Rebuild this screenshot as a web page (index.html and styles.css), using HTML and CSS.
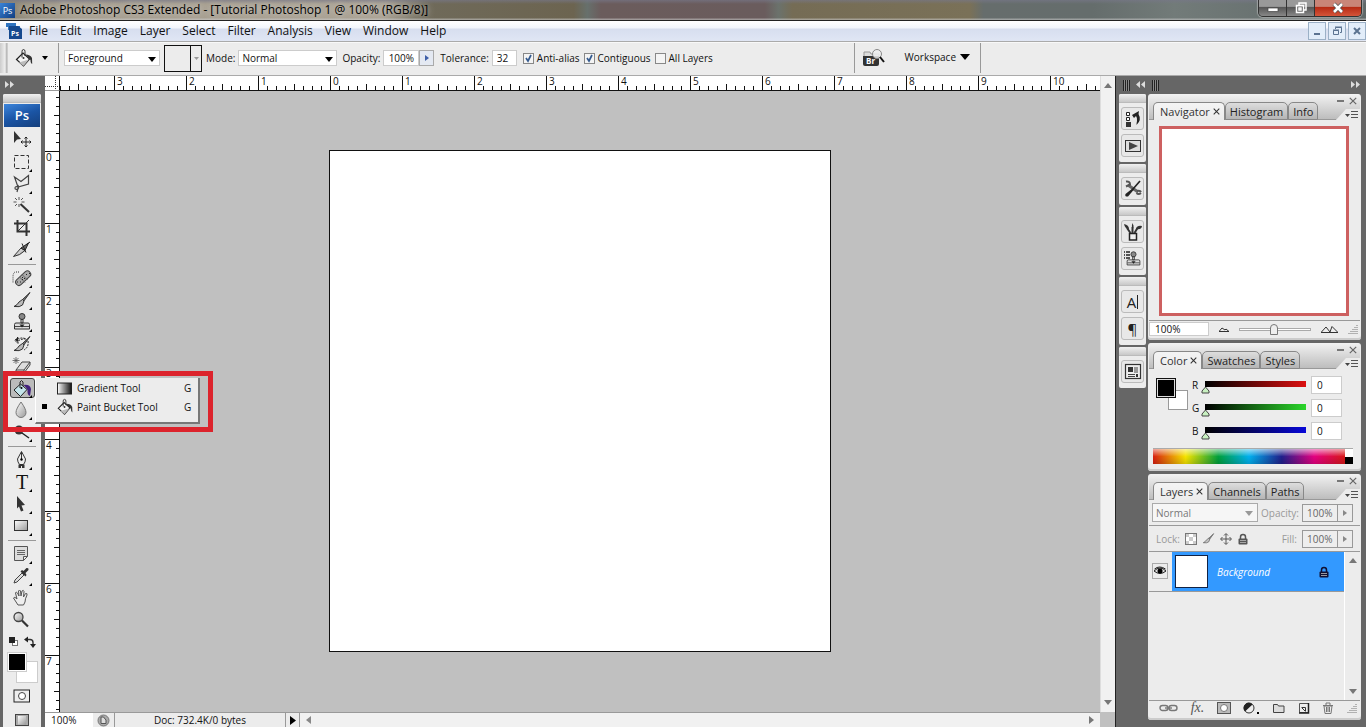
FILE: index.html
```html
<!DOCTYPE html>
<html lang="en">
<head>
<meta charset="utf-8">
<title>Adobe Photoshop CS3 Extended</title>
<link rel="stylesheet" href="styles.css">
</head>
<body>
<svg class="defs" aria-hidden="true">
  <defs>
    <linearGradient id="metal" x1="0" y1="0" x2="1" y2="1"><stop offset="0" stop-color="#fff"/><stop offset="1" stop-color="#999"/></linearGradient>
    <linearGradient id="fade"><stop offset="0" stop-color="#fff"/><stop offset="1" stop-color="#111"/></linearGradient>
    <symbol id="bucket" viewBox="0 0 20 20">
      <path d="M2.500 11.500 9 5l6.500 6-6 7z" fill="#f4f4f4" stroke="#222" stroke-width="1.200"/>
      <path d="M5 14.500 9.500 18l5.500-6.500z" fill="#bbb"/>
      <path d="M8 9.500V3.500Q8 1.500 9.500 1.500T11 3.500V8" fill="none" stroke="#333"/>
      <path d="M11.500 6.500Q16.500 6.500 18 10l.2 6q-1.700-.5-1.700-4L14.500 10z" fill="#333"/>
      <circle cx="9.500" cy="10" r="1" fill="#333"/>
    </symbol>
    <symbol id="stamp" viewBox="0 0 20 20">
      <circle cx="10" cy="4.500" r="3" fill="#888" stroke="#333"/>
      <path d="M9 7.500h2V11H9zM4 11h12q1.500 0 1.500 1.500V17h-15v-4.500Q2.500 11 4 11z" fill="#ddd" stroke="#333"/>
      <path d="M3 14.500h14" stroke="#444"/><path d="M7.500 12.500h5L10 15.500z" fill="#222"/>
    </symbol>
    <symbol id="brush" viewBox="0 0 20 20">
      <path d="M18 2.500 10 10l1.500 1.500z" fill="#777" stroke="#333"/>
      <path d="M10.500 9.500 7 12q-1.500 3-5 4.500 6 1 8.500-1.500L12 11z" fill="#bbb" stroke="#333"/>
    </symbol>
    <symbol id="lock" viewBox="0 0 12 12">
      <path d="M3.500 6V4q0-2.500 2.500-2.500T8.500 4v2" fill="none" stroke="currentColor" stroke-width="1.500"/>
      <rect x="1.500" y="5.500" width="9" height="6" rx="1" fill="currentColor"/><path d="M3 7.500h6M3 9.500h6" stroke="#bbb" stroke-width=".8"/>
    </symbol>
    <symbol id="cross" viewBox="0 0 8 8"><path d="m.8.8 6.400 6.400m0-6.400L.8 7.200" fill="none" stroke="currentColor" stroke-width="1.200"/></symbol>
    <symbol id="flymenu" viewBox="0 0 13 8"><path d="M0 3h5L2.500 6z" fill="#444"/><path d="M6 .5h7M6 3.500h7M6 6.500h7" stroke="#555"/></symbol>
    <symbol id="size-grip" viewBox="0 0 10 10"><path d="M9 1v1M7 3v1m2-1v1M5 5v1m2-1v1m2-1v1M3 7v1m2-1v1m2-1v1m2-1v1M1 9v1m2-1v1m2-1v1m2-1v1m2-1v1" stroke="#777"/></symbol>
  </defs>
</svg>

<header class="titlebar">
  <span class="app-badge">Ps</span>
  <h1 class="titlebar-text">Adobe Photoshop CS3 Extended - [Tutorial Photoshop 1 @ 100% (RGB/8)]</h1>
  <div class="window-buttons">
    <button class="win" aria-label="Minimize"><svg width="12" height="12"><rect x="1" y="6" width="10" height="3.500" fill="#fff" stroke="#444" stroke-width=".7"/></svg></button>
    <button class="win" aria-label="Restore"><svg width="12" height="12" fill="none"><path d="M4 3V1h7v7H9" stroke="#fff" stroke-width="1.500"/><path d="M1.500 3.500h7v7h-7zM4 6h2v2H4z" stroke="#fff" stroke-width="1.500"/></svg></button>
    <button class="win win-close" aria-label="Close"><svg width="12" height="12"><path d="m2 2 8 8m0-8-8 8" stroke="#555" stroke-width="4"/><path d="m2 2 8 8m0-8-8 8" stroke="#fff" stroke-width="2.500"/></svg></button>
  </div>
</header>

<nav class="menubar">
  <svg class="doc-icon" width="16" height="16"><path d="M0 0h10v3h4v4H2V4H0z" fill="#2f74c0"/><path d="M3 3h9l4 3v10H3z" fill="#16498e"/><text x="5" y="13" class="doc-icon-text">Ps</text></svg>
  <button class="menu">File</button><button class="menu">Edit</button><button class="menu">Image</button><button class="menu">Layer</button><button class="menu">Select</button><button class="menu">Filter</button><button class="menu">Analysis</button><button class="menu">View</button><button class="menu">Window</button><button class="menu">Help</button>
  <div class="doc-buttons">
    <button class="docbtn" aria-label="Minimize document"><svg width="12" height="12"><path d="M3 9h6" stroke="#5b7390" stroke-width="2"/></svg></button>
    <button class="docbtn" aria-label="Restore document"><svg width="12" height="12" fill="none" stroke="#5b7390"><path d="M4.500 4V2.500h6v5H9M4 2h7M2.500 5.500h5v4h-5zM2 5h6"/></svg></button>
    <button class="docbtn" aria-label="Close document"><svg width="12" height="12"><path d="m3 3 6 6m0-6L3 9" stroke="#5b7390" stroke-width="2"/></svg></button>
  </div>
</nav>

<section class="options" aria-label="Tool options">
  <span class="options-grip"></span>
  <button class="current-tool" aria-label="Paint Bucket Tool presets"><svg width="20" height="20"><use href="#bucket"/></svg><svg width="6" height="4"><path d="M0 0h6L3 4z"/></svg></button>
  <span class="rule"></span>
  <select class="field select fill-source" aria-label="Fill source"><option>Foreground</option></select>
  <button class="pattern" aria-label="Pattern"><span class="pattern-arrow"><svg width="5" height="3"><path d="M0 0h5L2.500 3z" fill="#999"/></svg></span></button>
  <label class="opt" for="mode">Mode:</label>
  <select class="field select blend-mode" id="mode"><option>Normal</option></select>
  <label class="opt" for="opacity">Opacity:</label>
  <span class="stepper"><input class="field num" id="opacity" value="100%"><button class="step" aria-label="Opacity slider"><svg width="4" height="6"><path d="M0 0v6l4-3z" fill="#3f5fa8"/></svg></button></span>
  <label class="opt" for="tolerance">Tolerance:</label>
  <input class="field tolerance" id="tolerance" value="32">
  <label class="check"><input type="checkbox" checked>Anti-alias</label>
  <label class="check"><input type="checkbox" checked>Contiguous</label>
  <label class="check"><input type="checkbox">All Layers</label>
  <div class="options-right">
    <button class="bridge" aria-label="Go to Bridge"><svg width="24" height="20"><path d="M2 4h6l1 2h8v4H2z" fill="#ddd" stroke="#999"/><path d="M1 8h16v8q0 2-2 2H3q-2 0-2-2z" fill="#333"/><text x="4" y="15.500" class="bridge-text">Br</text><circle cx="15" cy="6" r="4.500" fill="#eee" fill-opacity=".85" stroke="#888"/><path d="m18 9 4 5" stroke="#111" stroke-width="2"/></svg></button>
    <button class="workspace-btn">Workspace <svg width="10" height="6"><path d="M0 0h10L5 6z"/></svg></button>
  </div>
</section>

<main class="main">
  <aside class="toolbar" aria-label="Tools">
    <button class="collapse" aria-label="Expand tools"><svg width="10" height="8" fill="#ddd"><path d="M0 0v7l4-3.500zM5 0v7l4-3.500z"/></svg></button>
    <div class="toolpanel">
      <div class="grip"></div>
      <div class="ps-logo">Ps</div>
      <ul class="tools">
        <li class="tool plain"><button aria-label="Move"><svg width="20" height="20"><path d="M2 1v12l3-3.500 4-.5z" fill="#333"/><path d="M14 7v10M9 12h10M12.500 8.500 14 7l1.500 1.500m-3 7L14 17l1.500-1.500m-5-5L9 12l1.500 1.500m7-3L19 12l-1.500 1.500" fill="none" stroke="#222"/></svg></button></li>
        <li class="tool"><button aria-label="Marquee"><svg width="20" height="20"><rect x="2.500" y="3.500" width="14" height="13" fill="none" stroke="#333" stroke-dasharray="4 2"/></svg></button></li>
        <li class="tool"><button aria-label="Lasso"><svg width="20" height="20"><path d="M2.500 3 9 7.500l7.500-6V10L6 13 2.500 3zM6 13q-3-1-3 1t3 1q1-1 0-4m0 3-1 4" fill="none" stroke="#444" stroke-width="1.200"/></svg></button></li>
        <li class="tool"><button aria-label="Magic wand"><svg width="20" height="20"><path d="M7 1v3m0 4v3M1.500 6h3m5 0h3M3 2l2 2M3 10l2-2m4-4 2-2" stroke="#555"/><path d="m8.500 8 8.500 8" stroke="#333" stroke-width="2"/></svg></button></li>
        <li class="tool plain"><button aria-label="Crop"><svg width="20" height="20"><path d="M5.500 2v11.500H18M2 5.500h12.500V18" fill="none" stroke="#333" stroke-width="2"/><path d="M6 13 17 2" stroke="#333"/></svg></button></li>
        <li class="tool"><button aria-label="Slice"><svg width="20" height="20"><path d="M1.500 16.500 9 8l4 2.500q-5 5-11.500 6z" fill="url(#metal)" stroke="#333"/><path d="M9 8 16.500 3 13 10.500zM10 3.500l4 9M18 2l-4 3" fill="#666" stroke="#222"/></svg></button></li>
      </ul>
      <hr class="tool-rule">
      <ul class="tools">
        <li class="tool"><button aria-label="Healing brush"><svg width="22" height="20"><rect x="3" y="7" width="18" height="6.500" rx="3" transform="rotate(-43 12 10)" fill="#aaa" stroke="#444"/><path d="m8.500 9 5.500 5.500M11 6.500l5.500 5.500" stroke="#666"/><path d="M11 9.500h1m1 1h1m-3 1h1m3-5h1m2-1h1M6 14h1m2 0h1" stroke="#222"/><path d="M8 4H4Q2 5 2 9v6" fill="none" stroke="#333" stroke-dasharray="1 1"/></svg></button></li>
        <li class="tool"><button aria-label="Brush"><svg width="20" height="20"><use href="#brush"/></svg></button></li>
        <li class="tool"><button aria-label="Clone stamp"><svg width="20" height="20"><use href="#stamp"/></svg></button></li>
        <li class="tool"><button aria-label="History brush"><svg width="20" height="20"><use href="#brush"/><path d="M3 6.500 6 3v2q4-2 8 0-4-.5-8 2v2.500zM16 7q1 6-4 9" fill="none" stroke="#222" stroke-dasharray="2 1"/><path d="m3 6 3-3v5z" fill="#222"/></svg></button></li>
        <li class="tool"><button aria-label="Eraser"><svg width="20" height="20"><path d="m4 14 6-8h8l-6 8zM12 14v3l6-8V6M4 14v3h8" fill="#ddd" stroke="#444"/><path d="M4 1v7M.5 4.500h7M1.500 2l5 5m0-5-5 5" stroke="#555" stroke-width=".8"/></svg></button></li>
        <li class="tool active">
          <button aria-label="Paint bucket" aria-pressed="true"><svg width="20" height="20"><path d="M2 11 8.500 5l6.500 5.500L8.500 17.500z" fill="#c4e4ea" stroke="#222"/><path d="M8 9V3q1.500-3 3 0v4" fill="none" stroke="#222"/><path d="M11.500 6Q18 5 19 10l-1 7q-3-1-2.500-6L14 8.500z" fill="#41217c"/><circle cx="9.500" cy="9" r="1"/></svg></button>
          <div class="flyout" role="menu">
            <button class="flyout-item" role="menuitem"><span></span><svg width="18" height="14"><rect x="1.500" y="2" width="14" height="11" fill="url(#fade)" stroke="#222"/></svg><span>Gradient Tool</span><kbd>G</kbd></button>
            <button class="flyout-item" role="menuitem"><span class="bullet"></span><svg width="18" height="18"><use href="#bucket"/></svg><span>Paint Bucket Tool</span><kbd>G</kbd></button>
          </div>
          <div class="highlight"></div>
        </li>
        <li class="tool"><button aria-label="Blur"><svg width="20" height="20"><path d="M9 2q5 7 5 10.500a5 5 0 0 1-10 0Q4 9 9 2z" fill="url(#metal)" stroke="#777"/></svg></button></li>
        <li class="tool"><button aria-label="Dodge"><svg width="20" height="20"><circle cx="7" cy="8" r="4.500" fill="#3a3232"/><path d="m10 11 7 5" stroke="#222" stroke-width="1.500"/></svg></button></li>
      </ul>
      <hr class="tool-rule">
      <ul class="tools">
        <li class="tool"><button aria-label="Pen"><svg width="20" height="20"><path d="M9.500 1.500 5.500 9q0 3 2 5.500h4q2-2.500 2-5.500zM9.500 2v7" fill="#eee" stroke="#333"/><circle cx="9.500" cy="9.500" r="1.200"/><path d="M6.500 14.500h6V18H10v-2H9v2H6.500z" fill="#333"/></svg></button></li>
        <li class="tool"><button class="type-tool" aria-label="Type">T</button></li>
        <li class="tool"><button aria-label="Path selection"><svg width="20" height="20"><path d="m5 2 8 9-3.500.500 2 5-2.500 1-2-5L5 14.500z" fill="#333"/></svg></button></li>
        <li class="tool"><button aria-label="Rectangle"><svg width="20" height="20"><rect x="2.500" y="4.500" width="13" height="10" fill="url(#metal)" stroke="#333"/></svg></button></li>
      </ul>
      <hr class="tool-rule">
      <ul class="tools">
        <li class="tool"><button aria-label="Notes"><svg width="20" height="20"><path d="M2.500 2.500h13v10l-4 4h-9zM15.500 12.500h-4v4" fill="#ddd" stroke="#555"/><path d="M5 6.500h8M5 8.500h8M5 10.500h8" stroke="#666"/></svg></button></li>
        <li class="tool"><button aria-label="Eyedropper"><svg width="20" height="20"><path d="m2 17 1-3 7-7 2 2-7 7z" fill="#ddd" stroke="#444"/><path d="m8.500 5.500 5 5 1-1.500-1-2 3-3q.500-2.500-2-2l-3 3-1.500-1z" fill="#333"/></svg></button></li>
        <li class="tool plain"><button aria-label="Hand"><svg width="20" height="20"><path d="M6 17 1.500 10q1-2 3.500 1L3.500 5q.500-2 2 0L7 8l-.5-5q1-2 2 0L9 8l1-5q1.500-1.500 2 .5L11.500 9l2-3.500q2-.5 1.500 1.500-2 4-2 7l-1.500 3z" fill="#eee" stroke="#555"/></svg></button></li>
        <li class="tool plain"><button aria-label="Zoom"><svg width="20" height="20"><circle cx="6.500" cy="7" r="4.500" fill="url(#metal)" stroke="#444" stroke-width="1.300"/><path d="m10 10.500 6 6" stroke="#333" stroke-width="2.200"/></svg></button></li>
      </ul>
      <div class="mini-row">
        <button aria-label="Default colors"><svg width="11" height="11"><rect x="4.500" y="4.500" width="5" height="5" fill="#fff" stroke="#777"/><rect x="1" y="1" width="6" height="6" fill="#222"/></svg></button>
        <button aria-label="Swap colors"><svg width="12" height="12"><path d="M2 3.500h4q3 0 3 3v3" fill="none" stroke="#333" stroke-width="1.400"/><path d="M4 .5v6l-4-3zM6 8h6l-3 4z" fill="#222"/></svg></button>
      </div>
      <div class="swatches">
        <button class="swatch-back" aria-label="Background color"></button>
        <button class="swatch-front" aria-label="Foreground color"></button>
      </div>
      <button class="mode-btn" aria-label="Quick mask"><svg width="18" height="14"><rect x="1" y="1" width="15.500" height="12" fill="#eee" stroke="#222"/><circle cx="9" cy="7" r="3.500" fill="#fff" stroke="#444"/></svg></button>
      <button class="mode-btn" aria-label="Screen mode"><svg width="18" height="14"><rect x="2.500" y="1.500" width="13" height="11" fill="#aaa" stroke="#444"/><rect x="5" y="3" width="8" height="8.500" fill="url(#metal)"/></svg></button>
    </div>
  </aside>

  <section class="workspace">
    <div class="ruler-corner"></div>
    <div class="ruler ruler-x"><span>3</span><span>2</span><span>1</span><span>0</span><span>1</span><span>2</span><span>3</span><span>4</span><span>5</span><span>6</span><span>7</span><span>8</span><span>9</span><span>10</span></div>
    <div class="scroll-y"><svg width="8" height="5"><path d="M0 5h8L4 0z" fill="#777"/></svg><svg width="8" height="5"><path d="M0 0h8L4 5z" fill="#777"/></svg></div>
    <div class="ruler ruler-y"><span>0</span><span>1</span><span>2</span><span>3</span><span>4</span><span>5</span><span>6</span><span>7</span></div>
    <div class="viewport"><div class="artboard"></div></div>
    <footer class="statusbar">
      <input class="status-zoom" value="100%" aria-label="Zoom level">
      <button class="status-cue" aria-label="Version Cue"><svg width="13" height="13"><circle cx="6.500" cy="6.500" r="5.500" fill="#aaa" stroke="#777"/><path d="M4 3v6.500h5V6L6.500 3z" fill="#ddd" stroke="#555"/></svg></button>
      <span class="status-doc">Doc: 732.4K/0 bytes</span>
      <button class="status-more" aria-label="Status options"><svg width="6" height="9"><path d="M0 0v9l6-4.500z"/></svg></button>
      <div class="scroll-x"><svg width="5" height="8"><path d="M5 0v8L0 4z" fill="#888"/></svg><svg width="5" height="8"><path d="M0 0v8l5-4z" fill="#777"/></svg></div>
    </footer>
  </section>

  <aside class="dock">
    <div class="dock-column">
      <div class="dock-head"><span class="dock-bars"></span><svg width="10" height="8" fill="#ddd"><path d="M4 0v7L0 3.500zM9 0v7L5 3.500z"/></svg></div>
      <div class="icon-group"><div class="grip"></div>
        <button class="dock-icon" aria-label="History"><svg width="20" height="20"><path d="M3.500 3.500h3v3h-3zM3.500 8.500h3v3h-3z" fill="#fff" stroke="#222"/><path d="M3 13h5v5H3z" fill="#333"/><path d="m9 6 7-4-.5 3q3.500 6-2 11 0-2 .5-4 .5-3-1-5L11 9z" fill="#222"/></svg></button>
        <button class="dock-icon" aria-label="Actions"><svg width="20" height="20"><rect x="2.500" y="4.500" width="15" height="11" fill="#ddd" stroke="#333"/><path d="M6 6v8l9-4z" fill="#444"/></svg></button>
      </div>
      <div class="icon-group"><div class="grip"></div>
        <button class="dock-icon" aria-label="Tool presets"><svg width="20" height="20"><path d="m5 6 10 7" stroke="#666" stroke-width="3"/><path d="M3 2.500q4-.5 4 3L3 7.500M13.500 14q2 2 4.500 0M14 12q3-1 4 1" fill="none" stroke="#555" stroke-width="2"/><path d="m17 2-7 8" stroke="#222" stroke-width="1.700"/><path d="m10 9-7.500 6q-1 3 2.500 2.500l6-7z" fill="#222"/></svg></button>
      </div>
      <div class="icon-group"><div class="grip"></div>
        <button class="dock-icon" aria-label="Brushes"><svg width="20" height="20"><path d="M6.500 11.500h7V18h-7z" fill="#eee" stroke="#222" stroke-width="1.500"/><path d="M7.500 11 4 6m5.500 5V5m2 6 3-5" fill="none" stroke="#333" stroke-width="2"/><path d="M1 2q5 1 5 5Q2 7 1 2zM9.500 1q2 3 .5 6-2-2-.5-6zM13 7q1-4 6-3-.5 4-6 3z" fill="#333"/></svg></button>
        <button class="dock-icon" aria-label="Clone source"><svg width="20" height="20"><use href="#stamp" x="2" y="1" width="17" height="18"/><path d="M1 3h1m1 0h4M1 6h1m1 0h4M1 9h1m1 0h4" stroke="#222" stroke-width="1.500"/></svg></button>
      </div>
      <div class="icon-group"><div class="grip"></div>
        <button class="dock-icon glyph" aria-label="Character">A<span class="caret"></span></button>
        <button class="dock-icon glyph" aria-label="Paragraph">¶</button>
      </div>
      <div class="icon-group"><div class="grip"></div>
        <button class="dock-icon" aria-label="Layer comps"><svg width="20" height="20"><rect x="2.500" y="2.500" width="15" height="14" fill="#eee" stroke="#333" stroke-width="1.200"/><path d="M5 5h5v5H5z" fill="#333"/><path d="M11 6h4m-4 2h4m-4 2h4M5 12.500h7m-7 2h7" stroke="#444"/><path d="M13 12h2v3h-2z" fill="#333"/></svg></button>
      </div>
    </div>

    <div class="dock-panels">
      <div class="dock-head"><span class="dock-bars"></span><svg class="push" width="10" height="8" fill="#ddd"><path d="M0 0v7l4-3.500zM5 0v7l4-3.500z"/></svg></div>

      <section class="panel" aria-label="Navigator">
        <div class="panel-head">
          <div class="tabs"><button class="tab on">Navigator<svg width="7" height="7"><use href="#cross"/></svg></button><button class="tab">Histogram</button><button class="tab">Info</button></div>
          <div class="panel-ctl"><span class="panel-win"><i></i><svg width="8" height="8"><use href="#cross"/></svg></span><button class="panel-menu" aria-label="Navigator menu"><svg width="13" height="8"><use href="#flymenu"/></svg></button></div>
        </div>
        <div class="nav-body"><div class="nav-preview"></div></div>
        <div class="nav-foot">
          <input class="nav-zoom" value="100%" aria-label="Navigator zoom">
          <svg width="10" height="6"><path d="M0 5.500 3 2l3 2 1-1 3 2.500z" fill="#eee" stroke="#333"/></svg>
          <input class="nav-slider" type="range" value="49" aria-label="Zoom">
          <svg width="17" height="8"><path d="M0 7.500 5 2l4 5 2-5.500 6 6z" fill="#eee" stroke="#333"/></svg>
          <svg width="10" height="10"><use href="#size-grip"/></svg>
        </div>
      </section>

      <section class="panel" aria-label="Color">
        <div class="panel-head">
          <div class="tabs"><button class="tab on">Color<svg width="7" height="7"><use href="#cross"/></svg></button><button class="tab">Swatches</button><button class="tab">Styles</button></div>
          <div class="panel-ctl"><span class="panel-win"><i></i><svg width="8" height="8"><use href="#cross"/></svg></span><button class="panel-menu" aria-label="Color menu"><svg width="13" height="8"><use href="#flymenu"/></svg></button></div>
        </div>
        <div class="color-body">
          <div class="color-swatches"><button class="cs-back" aria-label="Background"></button><button class="cs-front" aria-label="Foreground"></button></div>
          <div class="channels">
            <div class="channel"><label for="r">R</label><input id="r" class="chan red" type="range" min="0" max="255" value="0"><input class="chan-num" value="0" aria-label="Red value"></div>
            <div class="channel"><label for="g">G</label><input id="g" class="chan green" type="range" min="0" max="255" value="0"><input class="chan-num" value="0" aria-label="Green value"></div>
            <div class="channel"><label for="b">B</label><input id="b" class="chan blue" type="range" min="0" max="255" value="0"><input class="chan-num" value="0" aria-label="Blue value"></div>
          </div>
        </div>
        <div class="spectrum"><span class="hues"></span><span class="ends"></span></div>
      </section>

      <section class="panel layers" aria-label="Layers">
        <div class="panel-head">
          <div class="tabs"><button class="tab on">Layers<svg width="7" height="7"><use href="#cross"/></svg></button><button class="tab">Channels</button><button class="tab">Paths</button></div>
          <div class="panel-ctl"><span class="panel-win"><i></i><svg width="8" height="8"><use href="#cross"/></svg></span><button class="panel-menu" aria-label="Layers menu"><svg width="13" height="8"><use href="#flymenu"/></svg></button></div>
        </div>
        <div class="layer-row">
          <select class="layer-mode" aria-label="Layer blend mode" disabled><option>Normal</option></select>
          <label class="push" for="lop">Opacity:</label><span class="layer-step"><input id="lop" value="100%" disabled><button disabled aria-label="Layer opacity slider"><svg width="4" height="6"><path d="M0 0v6l4-3z" fill="#888"/></svg></button></span>
        </div>
        <div class="layer-row locks">
          <span>Lock:</span>
          <svg width="12" height="12"><rect x=".5" y=".5" width="11" height="11" fill="#fff" stroke="#777"/><path d="M1 1h3v3h4V1h3v3H8v4h3v3H8V8H4v3H1V8h3V4H1z" fill="#ccc"/></svg>
          <svg width="13" height="13" opacity=".8"><use href="#brush"/></svg>
          <svg width="12" height="12" fill="none" stroke="#555"><path d="M6 1v10M1 6h10M4 2.500 6 .5l2 2m-4 7 2 2 2-2M2.500 4l-2 2 2 2m7-4 2 2-2 2"/></svg>
          <svg class="lock-gray" width="12" height="12"><use href="#lock"/></svg>
          <label class="push" for="lfill">Fill:</label><span class="layer-step"><input id="lfill" value="100%" disabled><button disabled aria-label="Fill slider"><svg width="4" height="6"><path d="M0 0v6l4-3z" fill="#888"/></svg></button></span>
        </div>
        <div class="layer-area">
          <ul class="layer-list">
            <li class="layer"><button class="eye" aria-label="Toggle visibility"><svg width="14" height="12"><path d="M1 6q6-6 12 0-6 5-12 0zM1.500 4q5-4 11 0" fill="#ddd" stroke="#222"/><circle cx="7" cy="6" r="2.500"/></svg></button>
              <div class="layer-main"><span class="thumb"></span><span class="layer-name">Background</span><svg class="push" width="12" height="12"><use href="#lock"/></svg></div></li>
          </ul>
          <div class="layer-scroll"><svg width="8" height="5"><path d="M0 5h8L4 0z" fill="#777"/></svg><svg width="8" height="5"><path d="M0 0h8L4 5z" fill="#777"/></svg></div>
        </div>
        <div class="layer-foot">
          <button aria-label="Link layers"><svg width="19" height="12" fill="none" stroke="#777" stroke-width="1.400"><rect x="1" y="3.500" width="8" height="5" rx="2.500"/><rect x="10" y="3.500" width="8" height="5" rx="2.500"/><path d="M6 6h7"/></svg></button>
          <button class="fx" aria-label="Layer style">fx.</button>
          <button aria-label="Add mask"><svg width="14" height="12"><rect x=".5" y=".5" width="13" height="11" fill="#bbb" stroke="#555"/><circle cx="7" cy="6" r="3.500" fill="#fff" stroke="#777"/></svg></button>
          <button aria-label="Adjustment layer"><svg width="17" height="13"><circle cx="6" cy="6" r="5" fill="#eee" stroke="#333"/><path d="M2 9.500A5 5 0 0 1 9.500 2.500z" fill="#222"/><path d="M14 10h2v2h-2z"/></svg></button>
          <button aria-label="New group"><svg width="12" height="12"><path d="M.5 2.500h4l1 1.500h5.500v6.500H.5z" fill="#ddd" stroke="#444"/></svg></button>
          <button aria-label="New layer"><svg width="12" height="12"><path d="M1.500 1.500h9v9h-9z" fill="#eee" stroke="#555"/><path d="M10.500 1v10H1" fill="none" stroke="#222" stroke-width="1.500"/><path d="M3.500 5.500h4v4M7 9 4 6" fill="none" stroke="#333"/></svg></button>
          <button aria-label="Delete layer"><svg width="12" height="12"><path d="M2 4h8l-1 7.500H3zM1 3.500h10M4 3V1h4v2M4.500 5v5M6 5v5m1.500-5v5" fill="none" stroke="#777"/></svg></button>
          <svg width="10" height="10"><use href="#size-grip"/></svg>
        </div>
      </section>
    </div>
  </aside>
</main>
</body>
</html>
```
FILE: styles.css
```css
* { box-sizing: border-box; }
body { margin: 0; height: 100vh; display: flex; flex-direction: column; overflow: hidden; background: #666; color: #111; font: 10px/14px "Open Sans", "Noto Sans", sans-serif; }
button, input, select { font: inherit; color: inherit; margin: 0; }
button { border: 0; padding: 0; background: none; }
ul { list-style: none; margin: 0; padding: 0; }
svg { display: block; flex: none; }
.defs { position: absolute; width: 0; height: 0; }
.push { margin-left: auto; }

/* Title bar */
.titlebar { flex: none; display: flex; align-items: center; gap: 5px; height: 21px; border-bottom: 1px solid #222; color: #000;
  background: linear-gradient(#778a 0, transparent 4px, transparent 18px, #ccc8 19px), linear-gradient(90deg, #8b8371, #a59d8e 5%, #aaa294 28%, #6f6a5a 31%, #6c6450 42%, #67706c 43%, #6b5c5c 44%, #6a5c5d 56%, #6b726c 57%, #756c55 58%, #7a7158 71%, #666d6c 72%, #656d6c 80%, #727b79 86%, #5f6868);}
.app-badge { width: 15px; height: 15px; background: linear-gradient(135deg, #3a83d8, #123e80); color: #fff; font-size: 9px; line-height: 15px; text-align: center; }
.titlebar-text { margin: 0; font-size: 12px; line-height: 18px; font-weight: 400; white-space: nowrap; text-shadow: 0 0 6px #ddd; }
.window-buttons { display: flex; align-self: flex-start; margin: 0 4px 0 auto; height: 17px; border: 1px solid #333; border-top: 0; border-radius: 0 0 5px 5px; overflow: hidden; box-shadow: 0 0 1px 1px #ccc8; }
.win { display: grid; place-items: center; width: 28px; background: linear-gradient(#999 40%, #555 45%, #888); border-right: 1px solid #333; }
.win-close { width: 46px; border: 0; background: linear-gradient(#c98578 40%, #b62a14 45%, #d4553a); }

/* Menu bar */
.menubar { flex: none; display: flex; align-items: center; height: 21px; padding-left: 6px; border-bottom: 1px solid #aaa; background: linear-gradient(#fff 0, #f2f5fc 7px, #d7deef 8px, #e0e6f4); font-size: 12px; line-height: 18px; }
.doc-icon { margin-right: 7px; }
.doc-icon-text { font-size: 7px; fill: #fff; font-weight: 700; }
.menu { margin-right: 12px; }
.doc-buttons { display: flex; gap: 2px; margin-left: auto; }
.docbtn { display: grid; place-items: center; width: 18px; height: 18px; border: 1px solid #9bb0c6; background: #e2edf9; }

/* Tool options */
.options { flex: none; display: flex; align-items: center; height: 34px; padding-bottom: 2px; border-top: 1px solid #f8f8f8; border-bottom: 1px solid #aaa; background: #ececec; }
.options-grip { align-self: stretch; width: 8px; background: linear-gradient(90deg, #ccc, #eee 5px, #aaa 7px, #eee); }
.current-tool { display: flex; align-items: center; gap: 8px; padding: 0 10px 0 6px; }
.rule { align-self: stretch; width: 1px; margin-right: 5px; background: #999; }
.field { height: 16px; border: 1px solid #ccc; background: #fff; padding: 0 3px; }
.select, .layer-mode { appearance: none; background: #fff url("data:image/svg+xml,%3Csvg xmlns='http://www.w3.org/2000/svg' width='8' height='5'%3E%3Cpath d='M0 0h8L4 5z'/%3E%3C/svg%3E") no-repeat right 3px bottom 3px; }
.fill-source { width: 96px; }
.pattern { width: 38px; height: 27px; margin: 0 4px; border: 1px solid #111; display: flex; justify-content: flex-end; }
.pattern-arrow { width: 11px; height: 100%; border-left: 1px solid #111; display: grid; place-items: center; }
.opt { margin-right: 3px; white-space: nowrap; }
.blend-mode { width: 99px; margin-right: 5px; }
.stepper { display: flex; margin-right: 6px; }
.num { width: 36px; text-align: center; }
.step { width: 15px; height: 16px; display: grid; place-items: center; border: 1px solid #aaa; background: #e4e9f2; }
.tolerance { width: 25px; margin-right: 6px; padding: 0 4px; }
.check { display: flex; align-items: center; gap: 3px; margin-right: 4px; white-space: nowrap; }
.check input { appearance: none; width: 11px; height: 11px; margin: 0; border: 1px solid #888; background: #f4f4f4; }
.check input:checked { background: #f4f4f4 url("data:image/svg+xml,%3Csvg xmlns='http://www.w3.org/2000/svg' width='9' height='9'%3E%3Cpath d='M2 4l2 3 3-6' fill='none' stroke='%23345a8f' stroke-width='1.700'/%3E%3C/svg%3E") center; }
.options-right { display: flex; align-items: center; gap: 19px; align-self: stretch; margin-left: auto; margin-right: 385px; border-left: 1px solid #999; border-right: 1px solid #999; padding: 0 10px 0 7px; }
.bridge-text { font-size: 8px; font-weight: 700; fill: #fff; }
.workspace-btn { display: flex; align-items: center; gap: 4px; padding-bottom: 3px; }

.main { flex: 1; min-height: 0; display: flex; }

/* Toolbar */
.toolbar { position: relative; z-index: 2; flex: none; width: 45px; padding: 0 4px 0 3px; display: flex; flex-direction: column; background: #666; }
.collapse { flex: none; height: 18px; padding-left: 2px; display: flex; align-items: center; }
.toolpanel { flex: 1; min-height: 0; background: #ececec; border-radius: 2px 2px 0 0; }
.grip { height: 9px; border-bottom: 1px solid #bbb; border-radius: 2px 2px 0 0; background: linear-gradient(#f0f0f0, #c8c8c8); }
.ps-logo { height: 23px; margin: 1px 1px 2px; background: linear-gradient(160deg, #3d86dc, #1b55a5 50%, #153f7c); color: #fff; font: 600 13px/23px "Open Sans", sans-serif; text-align: center; }
.tool { position: relative; height: 22px; display: grid; place-items: center; }
.tool > button { width: 25px; height: 20px; display: grid; place-items: center; }
.tool::after { content: ""; position: absolute; right: 9px; bottom: 1px; border: solid; border-width: 0 0 3px 3px; border-color: transparent transparent #000; }
.tool.plain::after { display: none; }
.tool.active > button { border: 1px solid #444; border-radius: 3px; background: #bbb; }
.type-tool { font: 20px/20px "Liberation Serif", serif; }
.tool-rule { height: 1px; margin: 3px 5px 2px; border: 0; background: #999; }
.flyout { position: absolute; z-index: 1; left: 32px; top: 1px; width: 165px; padding: 0 2px 6px 6px; border: 1px solid #fff; border-top: 0; border-right: 2px solid #777; border-bottom: 2px solid #777; background: #ececec; }
.flyout-item { display: grid; grid-template-columns: 14px 21px 1fr 12px; align-items: center; width: 100%; height: 19px; text-align: left; white-space: nowrap; }
.flyout-item kbd { font: inherit; }
.bullet { width: 5px; height: 5px; background: #000; }
.highlight { position: absolute; z-index: 2; left: 0; top: -6px; width: 210px; height: 61px; border: 5px solid #dc232c; pointer-events: none; }
.mini-row { display: flex; justify-content: space-between; align-items: center; height: 21px; padding: 0 5px; }
.swatches { position: relative; height: 32px; }
.swatch-front { position: absolute; left: 4px; top: 0; width: 20px; height: 20px; background: #000; border: 1px solid #ccc; outline: 1px solid #fff; outline-offset: -2px; }
.swatch-back { position: absolute; left: 13px; top: 9px; width: 22px; height: 22px; background: #fff; border: 1px solid #ccc; }
.mode-btn { width: 100%; height: 24px; display: grid; place-items: center; }

/* Document window */
.workspace { flex: 1; min-width: 0; display: grid; grid-template: 15px minmax(0, 1fr) 15px / 15px minmax(0, 1fr) 15px; background: #c0c0c0; }
.ruler { background-color: #fff; background-repeat: repeat-x; font-size: 10px; line-height: 10px; }
.ruler-corner { border-right: 1px solid #111; border-bottom: 1px solid #999; background: linear-gradient(90deg, #333 1px, transparent 1px) 0 10px / 2px 1px repeat-x, linear-gradient(#333 1px, transparent 1px) 10px 0 / 1px 2px repeat-y, #fff; }
.ruler-x { display: flex; padding-left: 54px; border-bottom: 1px solid #111;
  background-image: linear-gradient(90deg, #111 1px, transparent 1px), linear-gradient(90deg, #111 1px, transparent 1px), linear-gradient(90deg, #111 1px, transparent 1px);
  background-size: 9px 4px, 36px 6px, 72px 14px; background-position: 0 10px, 18px 8px, 54px 0; }
.ruler-x span { flex: 0 0 72px; padding-left: 3px; }
.ruler-x span:last-child { flex: 0 1 72px; min-width: 0; }
.ruler-y { overflow: hidden; padding-top: 60px; border-right: 1px solid #111; background-repeat: repeat-y;
  background-image: linear-gradient(#111 1px, transparent 1px), linear-gradient(#111 1px, transparent 1px), linear-gradient(#111 1px, transparent 1px);
  background-size: 3px 9px, 5px 36px, 14px 72px; background-position: 11px 6px, 9px 24px, 0 60px; }
.ruler-y span { display: block; height: 72px; padding: 1px 0 0 1px; }
.scroll-y { grid-row: span 2; display: flex; flex-direction: column; align-items: center; justify-content: space-between; padding: 7px 0; background: #f1f1f1; border-left: 1px solid #ddd; }
.viewport { overflow: hidden; padding: 59px 0 0 269px; }
.artboard { width: 502px; height: 502px; background: #fff; border: 1px solid #111; }
.statusbar { grid-column: span 3; display: flex; border-top: 1px solid #999; background: #ececec; margin-right: 15px; }
.status-zoom { width: 48px; border: 0; padding: 0 6px; background: #fff; }
.status-cue { width: 22px; display: grid; place-items: center; border-right: 1px solid #999; }
.status-doc { width: 171px; text-align: center; border-right: 1px solid #999; }
.status-more { width: 14px; display: grid; place-items: center; border-right: 1px solid #999; }
.scroll-x { flex: 1; display: flex; justify-content: space-between; align-items: center; padding: 0 6px; background: #f1f1f1; }

/* Dock */
.dock { flex: none; display: flex; gap: 2px; padding: 0 5px 7px 3px; border-left: 1px solid #222; background: #666; }
.dock-head { flex: none; height: 18px; display: flex; align-items: center; gap: 6px; padding-left: 4px; }
.dock-bars { width: 7px; height: 11px; background: repeating-linear-gradient(90deg, #222 0 1px, #888 1px 2px); }
.dock-column { width: 27px; }
.icon-group { display: flex; flex-direction: column; align-items: center; gap: 4px; margin-bottom: 2px; padding-bottom: 5px; border-radius: 2px; background: #ececec; }
.icon-group .grip { align-self: stretch; }
.dock-icon { width: 23px; height: 23px; display: grid; place-items: center; border: 1px solid #bbb; border-radius: 3px; background: #e8e8e8; }
.glyph { display: flex; align-items: center; justify-content: center; gap: 1px; font: 15px/20px "Open Sans", sans-serif; color: #222; }
.caret { width: 1px; height: 14px; background: #222; }
.dock-panels { width: 213px; display: flex; flex-direction: column; }
.panel { margin-bottom: 3px; padding: 0 1px 3px; border-radius: 3px; background: #ececec; box-shadow: inset 0 -2px #ccc; }
.panel-head { display: flex; height: 26px; background: linear-gradient(#f2f2f2, #bbb); border-radius: 3px 3px 0 0; }
.tabs { display: flex; flex: 1; padding: 8px 0 0 4px; font-size: 11px; line-height: 17px; border-bottom: 1px solid #999; }
.tab { height: 18px; padding: 0 4px; border: 1px solid #888; border-radius: 5px 5px 0 0; background: linear-gradient(#ddd, #b5b5b5); color: #222; }
.tab.on { display: flex; align-items: center; gap: 3px; padding-left: 6px; border-bottom: 0; background: linear-gradient(#f4f4f4, #ececec); color: #333; }
.panel-ctl { width: 24px; display: flex; flex-direction: column; justify-content: space-between; align-items: flex-end; color: #666; }
.panel-win { display: flex; gap: 5px; align-items: center; padding: 3px 3px 0 0; }
.panel-win i { width: 7px; height: 2px; background: #777; }
.panel-menu { width: 24px; height: 11px; padding: 1px 2px 0 9px; background: #ececec; clip-path: polygon(10px 0, 100% 0, 100% 100%, 0 100%); }

.nav-body { padding: 6px 11px 4px 10px; }
.nav-preview { aspect-ratio: 1; border: 3px solid #cd6060; background: #fff; }
.nav-foot { display: flex; align-items: center; gap: 10px; height: 17px; padding-right: 2px; border-top: 1px solid #999; }
.nav-zoom { width: 60px; height: 14px; border: 1px solid #ccc; padding: 0 5px; background: #fff; }
.nav-slider, .chan { appearance: none; margin: 0; background: none; }
.nav-slider { flex: 1; min-width: 0; height: 12px; }
.nav-slider::-webkit-slider-runnable-track { height: 3px; border: 1px solid #aaa; background: #fff; }
.nav-slider::-webkit-slider-thumb { appearance: none; width: 8px; height: 11px; margin-top: -5px; border: 1px solid #777; border-radius: 4px 4px 0 0; background: #eee; }

.color-body { display: flex; padding: 7px 18px 0 7px; }
.color-swatches { flex: none; position: relative; width: 36px; height: 34px; }
.cs-front { position: absolute; left: 0; top: 2px; width: 20px; height: 20px; border: 1px solid #111; outline: 1px solid #ddd; outline-offset: -2px; background: #000; }
.cs-back { position: absolute; left: 12px; top: 14px; width: 20px; height: 20px; border: 1px solid #999; background: #fff; }
.channels { flex: 1; min-width: 0; display: grid; grid-template-columns: minmax(0, 1fr); gap: 5px; }
.channel { display: flex; align-items: center; height: 18px; }
.channel label { width: 9px; }
.chan { flex: 1; min-width: 0; height: 18px; margin-right: 1px; }
.chan::-webkit-slider-runnable-track { height: 18px; background: linear-gradient(90deg, #000, var(--end)) center 5px / calc(100% - 8px) 6px no-repeat; }
.chan::-webkit-slider-thumb { appearance: none; width: 9px; height: 8px; margin-top: 10px; background: url("data:image/svg+xml,%3Csvg xmlns='http://www.w3.org/2000/svg' width='9' height='8'%3E%3Cpath d='M4.500 1L8 5v2H1V5z' fill='%23c8f0c0' stroke='%23444'/%3E%3C/svg%3E"); }
.red { --end: #dc1010; } .green { --end: #2bd62b; } .blue { --end: #0808d8; }
.chan-num { width: 31px; height: 18px; border: 1px solid #ccc; background: #fff; padding: 0 5px; }
.spectrum { display: flex; height: 16px; margin: 8px 7px 4px 4px; border-top: 1px solid #aaa; }
.hues { flex: 1; background: linear-gradient(#fff9, #fff0 50%, #0002), linear-gradient(90deg, #d82010, #f5e400 17%, #00a03c 34%, #00b0ee 50%, #20208c 67%, #e40080 84%, #d81818); }
.ends { width: 8px; background: linear-gradient(#fff 50%, #000 50%); }

.layers { flex: 1; min-height: 0; margin: 0; display: flex; flex-direction: column; }
.layer-row { flex: none; display: flex; align-items: center; height: 26px; padding: 0 7px 0 3px; border-bottom: 1px solid #999; color: #999; }
.layer-mode { width: 106px; height: 19px; padding: 0 3px; border: 1px solid #aaa; opacity: 1; color: #777; background-color: #f6f6f6; background-image: url("data:image/svg+xml,%3Csvg xmlns='http://www.w3.org/2000/svg' width='8' height='5'%3E%3Cpath d='M0 0h8L4 5z' fill='%23999'/%3E%3C/svg%3E"); background-position: right 4px bottom 5px; }
.layer-step { display: flex; margin-left: 3px; }
.layer-step input { width: 36px; height: 18px; padding: 0 4px; border: 1px solid #999; background: #eee; color: #666; }
.layer-step button { width: 15px; height: 18px; display: grid; place-items: center; border: 1px solid #999; border-left: 0; }
.locks { gap: 5px; padding-left: 7px; }
.locks .layer-step { margin-left: 0; }
.lock-gray { color: #555; }
.layer-area { flex: 1; min-height: 0; display: flex; }
.layer-list { flex: 1; border-right: 1px solid #fff; }
.layer { display: flex; height: 40px; border-bottom: 1px solid #999; }
.eye { width: 16px; height: 16px; margin: 11px 4px 0 3px; display: grid; place-items: center; border: 1px solid #aaa; }
.layer-main { flex: 1; display: flex; align-items: center; gap: 9px; padding: 0 14px 0 3px; background: #3399ff; color: #113; }
.thumb { width: 33px; height: 33px; border: 1px solid #124; background: #fff; }
.layer-name { color: #fff; font-style: italic; }
.layer-scroll { width: 15px; display: flex; flex-direction: column; align-items: center; justify-content: space-between; padding: 6px 0; }
.layer-foot { flex: none; display: flex; align-items: center; justify-content: space-between; height: 17px; padding: 0 3px 2px 10px; border-top: 1px solid #999; }
.fx { font: italic 14px/14px "Liberation Serif", serif; color: #555; }
```
